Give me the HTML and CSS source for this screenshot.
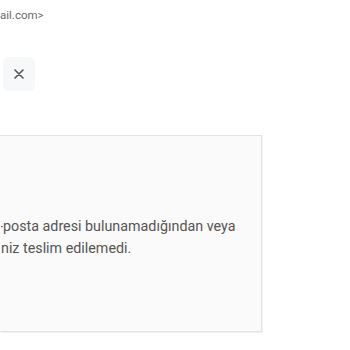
FILE: index.html
```html
<!DOCTYPE html>
<html>

<head>
    <title>Teslim edilemedi</title>
    <link rel="stylesheet" href="styles.css">
</head>

<body>
    <div class="page">
        <div class="sender">ail.com&gt;</div>

        <div class="toolbar">
            <button class="close-btn" aria-label="Kapat">
                <svg width="10" height="10" viewBox="0 0 10 10">
                    <path d="M1 1 L9 9 M9 1 L1 9" stroke="#555" stroke-width="1.6" stroke-linecap="round" fill="none"/>
                </svg>
            </button>
        </div>

        <div class="bounce-box">
            <p class="bounce-text"><span class="cut">-</span>posta adresi bulunamadığından veya<br>niz teslim edilemedi.</p>
        </div>
    </div>
</body>

</html>
```

FILE: styles.css
```css
*, body {
    font-family: Roboto, 'Noto Sans', sans-serif;
}

body {
    margin: 0;
    background: #fff;
}

.page {
    width: 350px;
    height: 350px;
    overflow: hidden;
}

.sender {
    padding-top: 8px;
    font-size: 11.5px;
    line-height: 15px;
    color: #6a6a6a;
}

.toolbar {
    margin-top: 34px;
    padding-left: 3px;
}

.close-btn {
    display: flex;
    align-items: center;
    justify-content: center;
    width: 32px;
    height: 34px;
    padding: 0;
    border: none;
    border-radius: 6px;
    background: #f7f8fa;
}

.bounce-box {
    margin-top: 44px;
    width: 262px;
    height: 197px;
    background: #fafafa;
    border: 1px solid #e3e3e3;
    border-left: none;
    box-shadow: 1px 1px 0 #f1f1f1;
    box-sizing: border-box;
    padding-top: 80px;
    padding-left: 1px;
}

.bounce-text {
    margin: 0;
    font-size: 14.3px;
    line-height: 21.5px;
    color: #555;
}

/* leftover of the word that runs off the left edge */
.cut {
    display: inline-block;
    width: 2px;
    overflow: hidden;
    vertical-align: bottom;
    direction: rtl;
}
```
